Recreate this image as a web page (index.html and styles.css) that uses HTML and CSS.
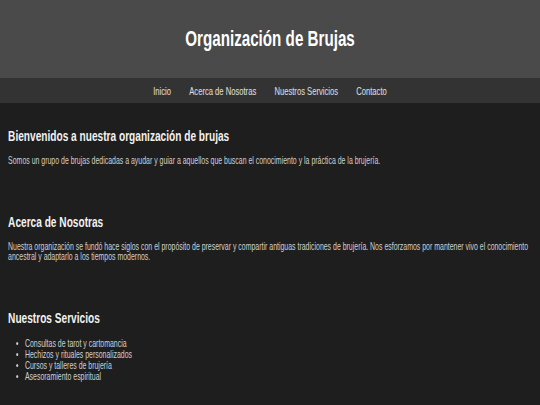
FILE: index.html
```html
<!DOCTYPE html>
<html lang="es">
<head>
<meta charset="utf-8">
<title>Organización de Brujas</title>
<link rel="stylesheet" href="styles.css">
</head>
<body>
<div class="viewport">
  <div class="page">
    <header class="site-header">
      <h1 class="site-title">Organización de Brujas</h1>
    </header>
    <nav class="site-nav">
      <a href="#inicio">Inicio</a>
      <a href="#acerca">Acerca de Nosotras</a>
      <a href="#servicios">Nuestros Servicios</a>
      <a href="#contacto">Contacto</a>
    </nav>
    <main class="content">
      <section class="block" id="inicio">
        <h2>Bienvenidos a nuestra organización de brujas</h2>
        <p>Somos un grupo de brujas dedicadas a ayudar y guiar a aquellos que buscan el conocimiento y la práctica de la brujería.</p>
      </section>
      <section class="block" id="acerca">
        <h2>Acerca de Nosotras</h2>
        <p>Nuestra organización se fundó hace siglos con el propósito de preservar y compartir antiguas tradiciones de brujería. Nos esforzamos por mantener vivo el conocimiento ancestral y adaptarlo a los tiempos modernos.</p>
      </section>
      <section class="block" id="servicios">
        <h2>Nuestros Servicios</h2>
        <ul>
          <li>Consultas de tarot y cartomancia</li>
          <li>Hechizos y rituales personalizados</li>
          <li>Cursos y talleres de brujería</li>
          <li>Asesoramiento espiritual</li>
        </ul>
      </section>
    </main>
  </div>
</div>
</body>
</html>
```
FILE: styles.css
```css
html, body {
  margin: 0;
  padding: 0;
  overflow: hidden;
}
body {
  background: #1e1e1e;
  font-family: "Liberation Sans", Arial, sans-serif;
}
/* Clip frame the size of the window. */
.viewport {
  width: 540px;
  height: 405px;
  overflow: hidden;
}
/* The layout is drawn on an 800px-wide canvas and squeezed to the 540px frame,
   which gives the narrow letterforms of the reference. */
.page {
  width: 800px;
  height: 405px;
  background: #1e1e1e;
  color: #d0d0d0;
  transform: scaleX(0.675);
  transform-origin: 0 0;
}
.site-header {
  height: 78px;
  background: #4a4a4a;
  display: flex;
  align-items: center;
  justify-content: center;
}
.site-title {
  margin: 0;
  font-size: 22.5px;
  font-weight: bold;
  color: #ffffff;
}
.site-nav {
  height: 25px;
  background: #333333;
  display: flex;
  align-items: center;
  justify-content: center;
  gap: 27px;
}
.site-nav a {
  color: #e0e0e0;
  text-decoration: none;
  font-size: 11.3px;
}
.content {
  padding: 24px 12px 0;
}
.block h2 {
  margin: 0;
  font-size: 15px;
  line-height: 17px;
  color: #f2f2f2;
}
.block p {
  margin: 12px 0 0;
  font-size: 10.3px;
  line-height: 10px;
  color: #d0d0d0;
}
.block + .block {
  margin-top: 47px;
}
.block ul {
  margin: 11.6px 0 0;
  padding-left: 25px;
  font-size: 10.3px;
  line-height: 11.3px;
  color: #d0d0d0;
}
```
